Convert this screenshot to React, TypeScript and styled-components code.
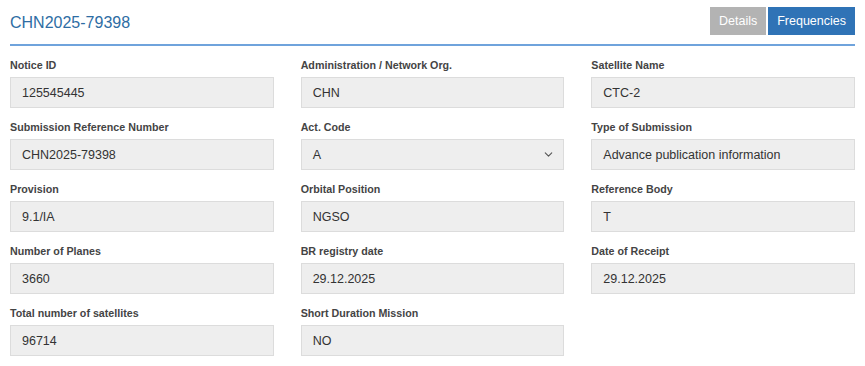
import React from 'react';
import styled, { createGlobalStyle } from 'styled-components';
import { ChevronDown } from 'lucide-react';

const GlobalStyle = createGlobalStyle`
  body {
    margin: 0;
    background: #fff;
    font-family: "Liberation Sans", Arial, sans-serif;
  }
`;

const Container = styled.div`
  padding: 7px 10px 0 10px;
`;

const Header = styled.div`
  display: flex;
  align-items: center;
  justify-content: space-between;
  padding-bottom: 9px;
  border-bottom: 2px solid #6fa3dc;
`;

const Title = styled.h3`
  margin: 0;
  padding-top: 3px;
  font-size: 16px;
  font-weight: normal;
  color: #2e6da4;
`;

const Tabs = styled.div`
  display: flex;
  gap: 2px;
`;

const TabButton = styled.button<{ active?: boolean }>`
  height: 28px;
  padding: 0 9px;
  border: none;
  font-family: inherit;
  font-size: 12.5px;
  color: #fff;
  background: ${props => (props.active ? '#2f73b6' : '#b3b3b3')};
  cursor: pointer;
`;

const FormGrid = styled.div`
  display: grid;
  grid-template-columns: repeat(3, 1fr);
  column-gap: 27px;
  row-gap: 12px;
  padding-top: 12px;
`;

const Field = styled.div`
  display: flex;
  flex-direction: column;
`;

const Label = styled.label`
  font-size: 10.7px;
  font-weight: bold;
  line-height: 14px;
  color: #444;
  margin-bottom: 5px;
`;

const ValueBox = styled.div`
  position: relative;
  box-sizing: border-box;
  height: 31px;
  padding: 0 11px;
  display: flex;
  align-items: center;
  background: #eeeeee;
  border: 1px solid #dcdcdc;
  font-size: 12.5px;
  color: #333;
`;

const Chevron = styled.span`
  position: absolute;
  right: 8px;
  top: 8px;
  color: #555;
  display: flex;
`;

interface FieldData {
  label: string;
  value: string;
  select?: boolean;
}

const fields: FieldData[] = [
  { label: 'Notice ID', value: '125545445' },
  { label: 'Administration / Network Org.', value: 'CHN' },
  { label: 'Satellite Name', value: 'CTC-2' },
  { label: 'Submission Reference Number', value: 'CHN2025-79398' },
  { label: 'Act. Code', value: 'A', select: true },
  { label: 'Type of Submission', value: 'Advance publication information' },
  { label: 'Provision', value: '9.1/IA' },
  { label: 'Orbital Position', value: 'NGSO' },
  { label: 'Reference Body', value: 'T' },
  { label: 'Number of Planes', value: '3660' },
  { label: 'BR registry date', value: '29.12.2025' },
  { label: 'Date of Receipt', value: '29.12.2025' },
  { label: 'Total number of satellites', value: '96714' },
  { label: 'Short Duration Mission', value: 'NO' },
];

const App: React.FC = () => {
  return (
    <Container>
      <GlobalStyle />
      <Header>
        <Title>CHN2025-79398</Title>
        <Tabs>
          <TabButton>Details</TabButton>
          <TabButton active>Frequencies</TabButton>
        </Tabs>
      </Header>

      <FormGrid>
        {fields.map((f, i) => (
          <Field key={i}>
            <Label>{f.label}</Label>
            <ValueBox>
              {f.value}
              {f.select && (
                <Chevron>
                  <ChevronDown size={13} strokeWidth={2} />
                </Chevron>
              )}
            </ValueBox>
          </Field>
        ))}
      </FormGrid>
    </Container>
  );
};

export default App;
